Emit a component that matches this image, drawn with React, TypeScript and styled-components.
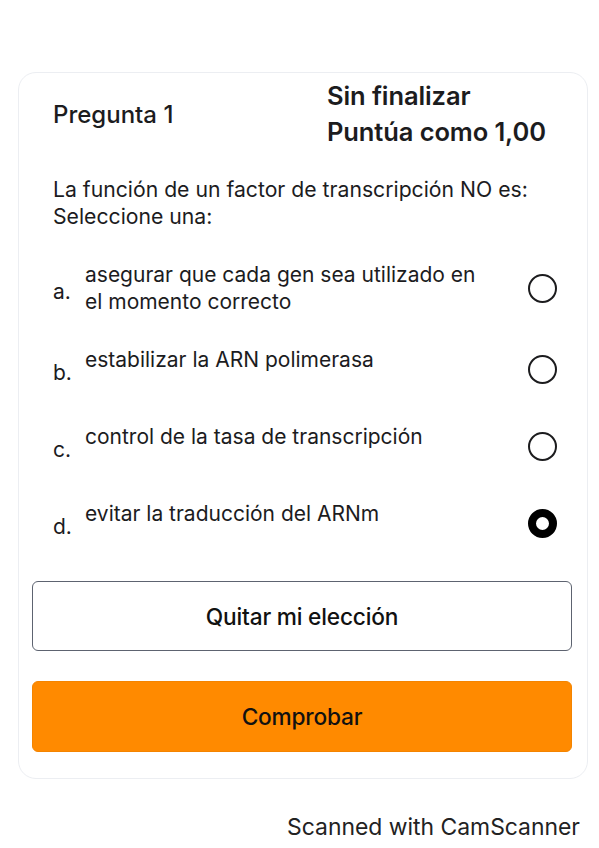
import styled, { createGlobalStyle } from "styled-components";

const GlobalStyle = createGlobalStyle`
  body {
    margin: 0;
    background: #ffffff;
    font-family: Inter, Roboto, "Liberation Sans", sans-serif;
    color: #1c1c1e;
  }
`;

const Page = styled.main`
  width: 599px;
  padding: 72px 11px 0 18px;
  box-sizing: border-box;
`;

const Card = styled.section`
  border: 1px solid #eceef2;
  border-radius: 18px;
  padding: 5px 14px 26px 13px;
`;

const Header = styled.header`
  display: flex;
  align-items: center;
  padding-left: 21px;
`;

const QuestionNo = styled.h2`
  width: 274px;
  margin: 0;
  font-size: 24px;
  font-weight: 500;
`;

const Status = styled.div`
  display: flex;
  flex-direction: column;
  font-size: 25.5px;
  font-weight: 600;
  line-height: 36px;
  letter-spacing: -0.1px;
`;

const Prompt = styled.div`
  margin: 26px 0 0 21px;
  font-size: 21.2px;
  line-height: 27px;
`;

const Options = styled.div`
  display: flex;
  flex-direction: column;
  gap: 31px;
  margin: 31px 0 0 21px;
`;

const OptionRow = styled.label`
  display: flex;
  align-items: center;
  min-height: 46px;
  padding-right: 16px;
`;

const Letter = styled.span`
  width: 32px;
  font-size: 21px;
  padding-top: 6px;
`;

const OptionText = styled.span`
  flex: 1;
  align-self: flex-start;
  font-size: 21px;
  line-height: 27px;
  padding-right: 40px;
`;

const Radio = styled.span<{ $checked?: boolean }>`
  width: 29px;
  height: 29px;
  box-sizing: border-box;
  border-radius: 50%;
  border: ${(p) => (p.$checked ? "8.5px solid #000" : "2px solid #1c1c1e")};
  flex-shrink: 0;
`;

const Button = styled.button<{ $primary?: boolean }>`
  display: block;
  width: 540px;
  border-radius: 6px;
  font-family: inherit;
  font-size: 22.7px;
  font-weight: 500;
  letter-spacing: -0.2px;
  color: #111;
  cursor: pointer;
  background: ${(p) => (p.$primary ? "#ff8a00" : "#ffffff")};
  border: ${(p) => (p.$primary ? "1px solid #f48400" : "1.5px solid #5d6370")};
  height: ${(p) => (p.$primary ? "71px" : "70px")};
  margin-top: ${(p) => (p.$primary ? "30px" : "35px")};
`;

const Footer = styled.div`
  text-align: right;
  margin: 34px 8px 0 0;
  font-size: 22.9px;
  color: #222;
`;

const options = [
  { letter: "a.", text: "asegurar que cada gen sea utilizado en el momento correcto" },
  { letter: "b.", text: "estabilizar la ARN polimerasa" },
  { letter: "c.", text: "control de la tasa de transcripción" },
  { letter: "d.", text: "evitar la traducción del ARNm", checked: true },
];

export default function App() {
  return (
    <>
      <GlobalStyle />
      <Page>
        <Card>
          <Header>
            <QuestionNo>Pregunta 1</QuestionNo>
            <Status>
              <span>Sin finalizar</span>
              <span>Puntúa como 1,00</span>
            </Status>
          </Header>
          <Prompt>
            La función de un factor de transcripción NO es:
            <br />
            Seleccione una:
          </Prompt>
          <Options>
            {options.map((o) => (
              <OptionRow key={o.letter}>
                <Letter>{o.letter}</Letter>
                <OptionText>{o.text}</OptionText>
                <Radio $checked={o.checked} />
              </OptionRow>
            ))}
          </Options>
          <Button>Quitar mi elección</Button>
          <Button $primary>Comprobar</Button>
        </Card>
        <Footer>Scanned with CamScanner</Footer>
      </Page>
    </>
  );
}
